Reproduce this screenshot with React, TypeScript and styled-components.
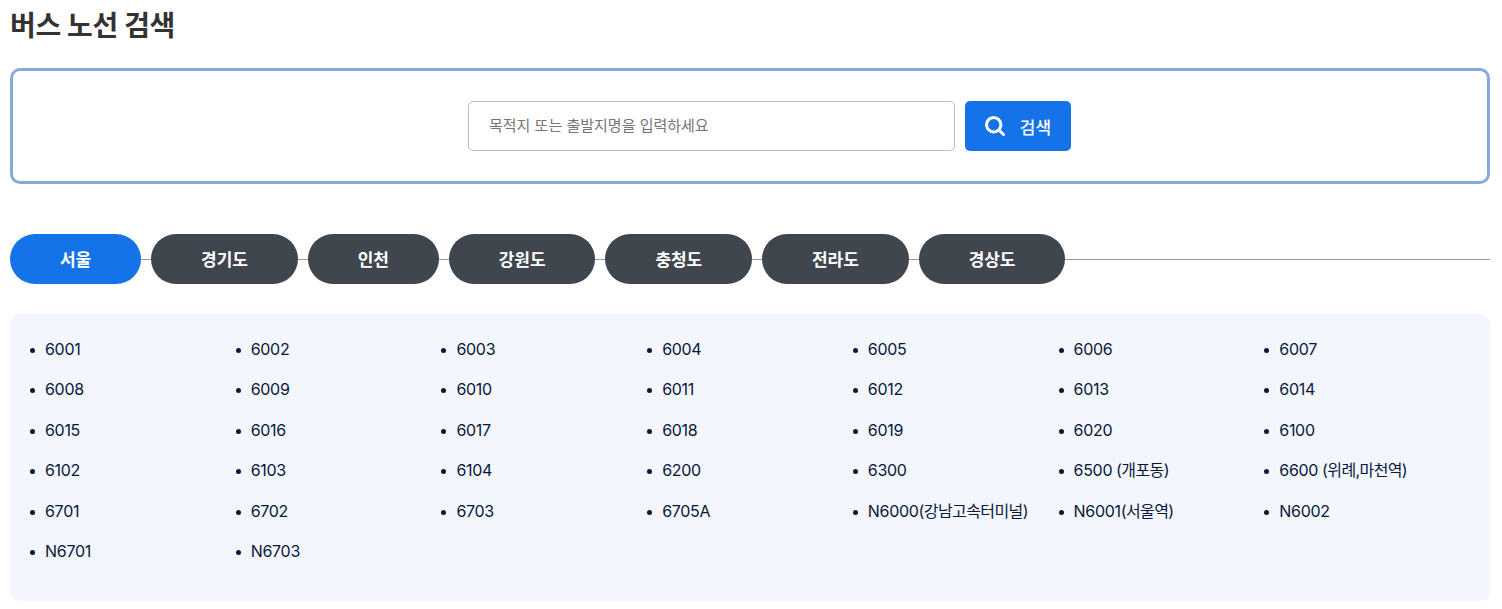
import { useState } from 'react'
import styled, { createGlobalStyle } from 'styled-components'

const REGIONS = ['서울', '경기도', '인천', '강원도', '충청도', '전라도', '경상도']

const ROUTES = [
  { no: '6001' }, { no: '6002' }, { no: '6003' }, { no: '6004' }, { no: '6005' }, { no: '6006' }, { no: '6007' },
  { no: '6008' }, { no: '6009' }, { no: '6010' }, { no: '6011' }, { no: '6012' }, { no: '6013' }, { no: '6014' },
  { no: '6015' }, { no: '6016' }, { no: '6017' }, { no: '6018' }, { no: '6019' }, { no: '6020' }, { no: '6100' },
  { no: '6102' }, { no: '6103' }, { no: '6104' }, { no: '6200' }, { no: '6300' },
  { no: '6500', note: ' (개포동)' },
  { no: '6600', note: ' (위례,마천역)' },
  { no: '6701' }, { no: '6702' }, { no: '6703' }, { no: '6705A' },
  { no: 'N6000', note: '(강남고속터미널)' },
  { no: 'N6001', note: '(서울역)' },
  { no: 'N6002' },
  { no: 'N6701' }, { no: 'N6703' },
]

const App = () => {
  const [selectedRegion, setSelectedRegion] = useState(REGIONS[0])

  return (
    <Page>
      <GlobalStyle />
      <Title>버스 노선 검색</Title>
      <SearchBox>
        <SearchInput placeholder='목적지 또는 출발지명을 입력하세요' />
        <SearchButton type='button'>
          <svg width='20' height='20' viewBox='0 0 20 20' fill='none' stroke='#fff' strokeLinecap='round'>
            <circle cx='8.7' cy='8.7' r='7.2' strokeWidth='3' />
            <path d='M14.2 14.2 L18.5 18.5' strokeWidth='3' />
          </svg>
          검색
        </SearchButton>
      </SearchBox>
      <Tabs>
        {REGIONS.map((region) => (
          <Tab
            key={region}
            type='button'
            $active={region === selectedRegion}
            onClick={() => setSelectedRegion(region)}
          >
            {region}
          </Tab>
        ))}
      </Tabs>
      <RoutePanel>
        <RouteList>
          {ROUTES.map((route) => (
            <RouteItem key={route.no}>
              {route.no}
              {route.note && <RouteNote>{route.note}</RouteNote>}
            </RouteItem>
          ))}
        </RouteList>
      </RoutePanel>
    </Page>
  )
}

export default App

const GlobalStyle = createGlobalStyle`
  * {
    box-sizing: border-box;
  }
  body {
    margin: 0;
    background: #fff;
    font-family: Inter, 'Noto Sans CJK KR', sans-serif;
  }
`

const Page = styled.div`
  padding: 0 12px 8px 10px;
`

const Title = styled.h1`
  margin: 0;
  height: 68px;
  padding-top: 9px;
  font-size: 28px;
  line-height: 34px;
  font-weight: 700;
  letter-spacing: -0.35px;
  color: #333;
`

const SearchBox = styled.div`
  display: flex;
  justify-content: center;
  align-items: center;
  gap: 10px;
  height: 116px;
  padding-left: 39px;
  border: 3px solid #86aad9;
  border-radius: 10px;
`

const SearchInput = styled.input`
  width: 487px;
  height: 50px;
  padding: 0 20px 1px;
  border: 1px solid #bbb;
  border-radius: 5px;
  outline: none;
  font-family: inherit;
  font-size: 15px;

  &::placeholder {
    color: #757575;
    opacity: 1;
  }
`

const SearchButton = styled.button`
  display: flex;
  align-items: center;
  justify-content: center;
  gap: 15px;
  width: 106px;
  height: 50px;
  padding: 0;
  border: 0;
  border-radius: 5px;
  background: #1573e9;
  color: #fff;
  font-family: inherit;
  font-size: 17px;
  font-weight: 500;
`

const Tabs = styled.div`
  position: relative;
  display: flex;
  gap: 10px;
  margin-top: 50px;

  &::before {
    content: '';
    position: absolute;
    left: 0;
    right: 0;
    top: 25px;
    height: 1px;
    background: #999;
  }
`

const Tab = styled.button<{ $active: boolean }>`
  position: relative;
  height: 50px;
  padding: 0 50px 2px;
  border: 0;
  border-radius: 25px;
  background: ${({ $active }) => ($active ? '#1573e9' : '#3f464e')};
  color: #fff;
  font-family: inherit;
  font-size: 17px;
  font-weight: 700;
  letter-spacing: -0.1px;
  white-space: nowrap;
`

const RoutePanel = styled.div`
  height: 287px;
  margin-top: 30px;
  padding: 15px 20px;
  border-radius: 10px;
  background: #f3f6fd;
`

const RouteList = styled.ul`
  display: grid;
  grid-template-columns: repeat(7, 1fr);
  grid-auto-rows: 40.4px;
  margin: 0;
  padding: 0;
  list-style: none;
`

const RouteItem = styled.li`
  position: relative;
  padding-left: 15px;
  font-size: 16px;
  line-height: 40.4px;
  letter-spacing: -0.3px;
  color: #08183a;
  white-space: nowrap;

  &::before {
    content: '';
    position: absolute;
    left: 0;
    top: 19px;
    width: 5px;
    height: 5px;
    border-radius: 50%;
    background: #08183a;
  }
`

const RouteNote = styled.span`
  letter-spacing: -0.6px;
`
